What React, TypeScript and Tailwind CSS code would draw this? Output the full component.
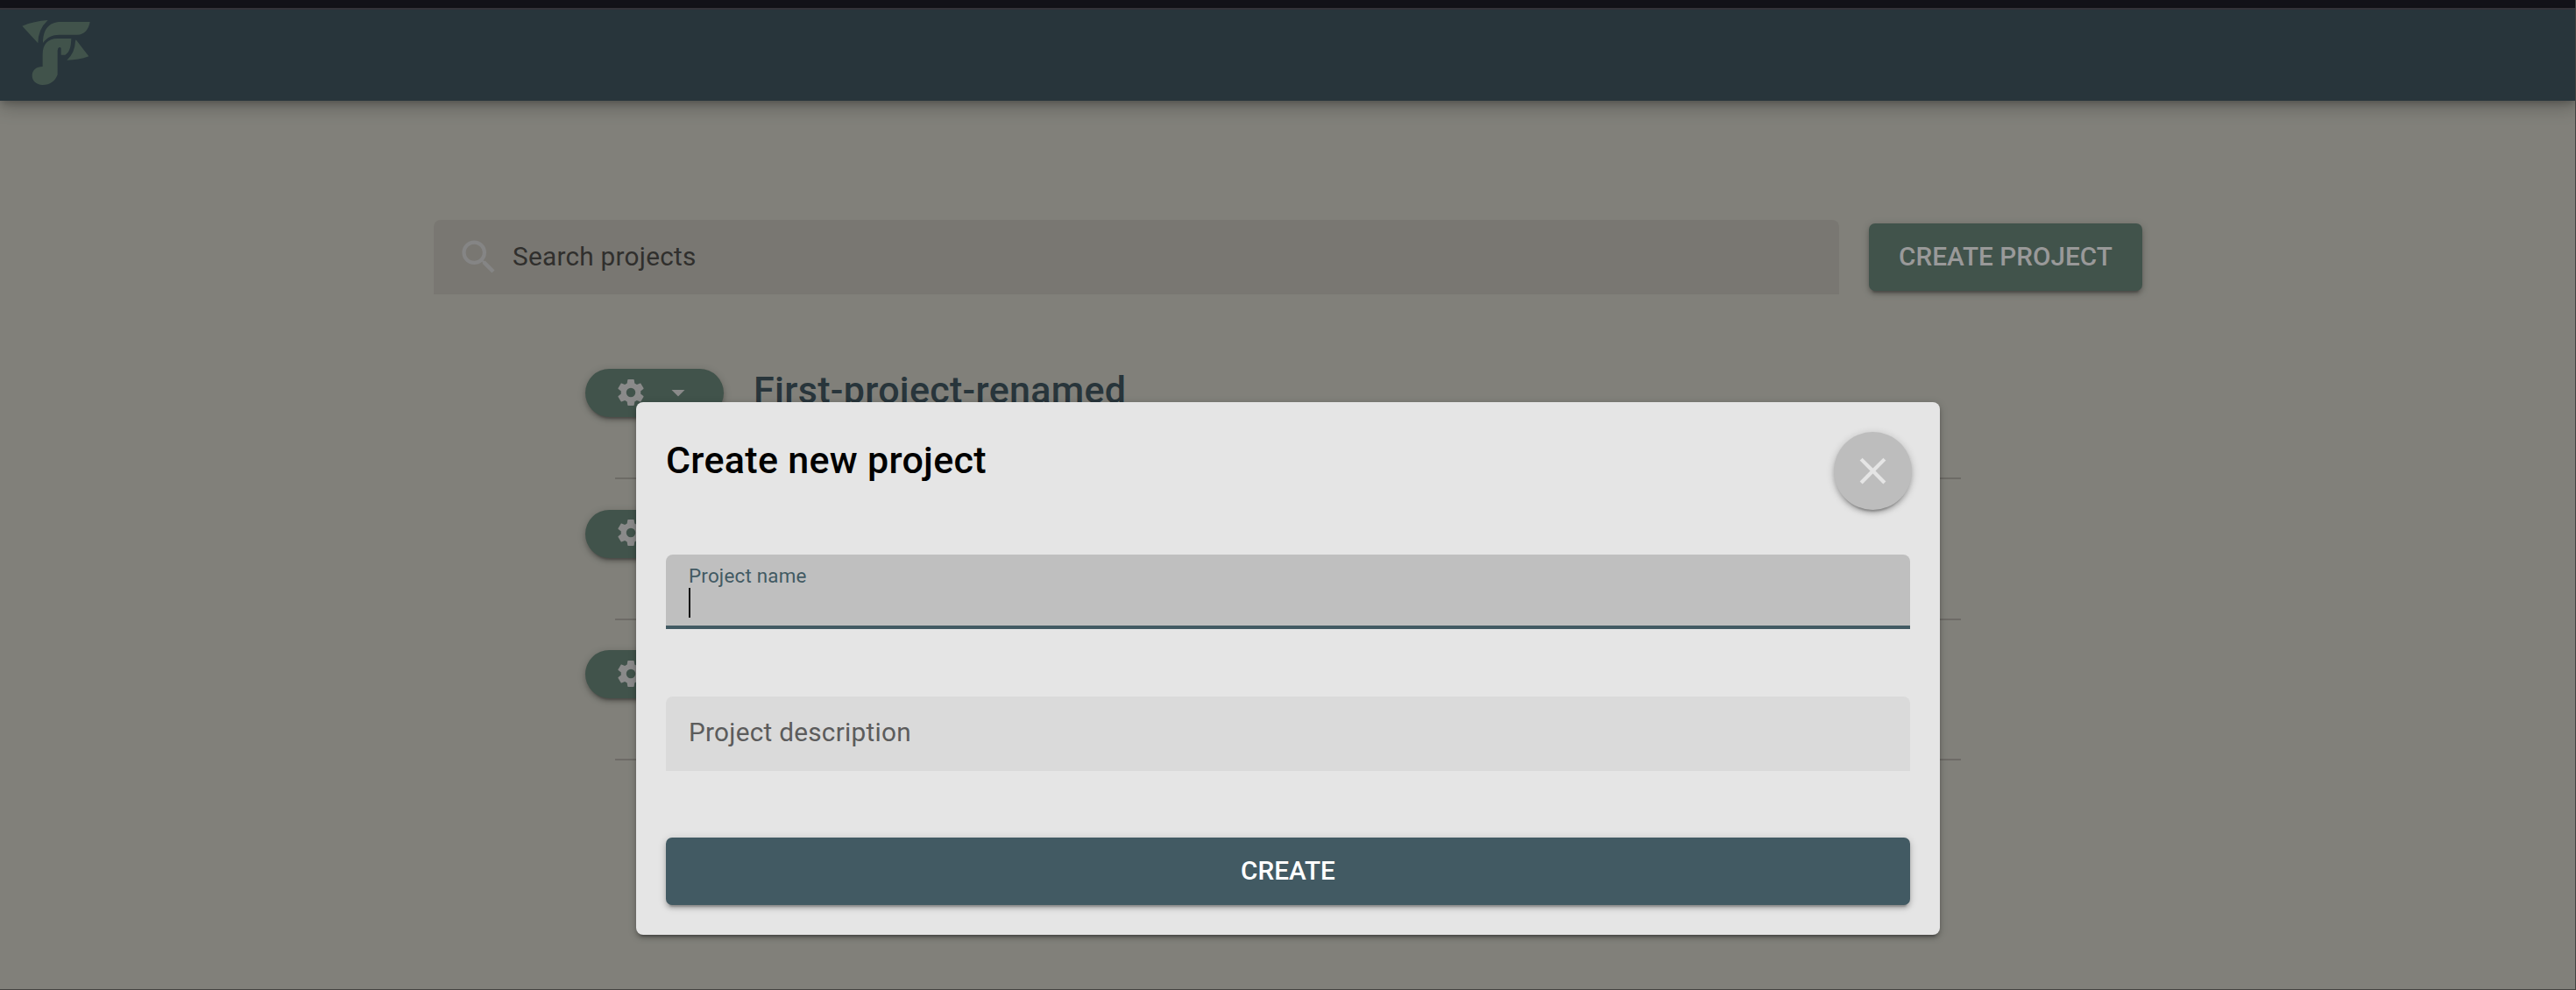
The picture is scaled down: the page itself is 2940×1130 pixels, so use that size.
import React from "react";
import { MdClose, MdSearch } from "react-icons/md";

const raised =
  "shadow-[0_6px_2px_-4px_rgba(0,0,0,0.2),0_4px_4px_0_rgba(0,0,0,0.14),0_2px_10px_0_rgba(0,0,0,0.2)]";

function Logo() {
  return (
    <svg className="h-[80px] w-[83px]" viewBox="70 60 249 240" fill="#41534b">
      <path d="M77 89 Q118 72 165 69 Q131 100 131 148 Z" />
      <path d="M148 147 C148 102 168 75 208 75 H309 C305 100 290 119 266 119 H205 C180 119 162 128 148 147 Z" />
      <path d="M147 228 V185 C147 152 165 132 197 132 H245 C244 160 240 178 224 188 H210 V166 Q209 161 204 162 Q198 164 198 173 V256 C190 278 172 291 147 291 C125 291 111 277 111 259 C111 240 126 228 147 228 Z" />
      <path d="M261 136 L305 193 Q270 206 230 206 Q258 180 259 140 Z" />
    </svg>
  );
}

function Gear() {
  return (
    <svg className="size-9" viewBox="0 0 24 24" fill="currentColor">
      <path d="M12,15.5A3.5,3.5 0 0,1 8.5,12A3.5,3.5 0 0,1 12,8.5A3.5,3.5 0 0,1 15.5,12A3.5,3.5 0 0,1 12,15.5M19.43,12.97C19.47,12.65 19.5,12.33 19.5,12C19.5,11.67 19.47,11.34 19.43,11L21.54,9.37C21.73,9.22 21.78,8.95 21.66,8.73L19.66,5.27C19.54,5.05 19.27,4.96 19.05,5.05L16.56,6.05C16.04,5.66 15.5,5.32 14.87,5.07L14.5,2.42C14.46,2.18 14.25,2 14,2H10C9.75,2 9.54,2.18 9.5,2.42L9.13,5.07C8.5,5.32 7.96,5.66 7.44,6.05L4.95,5.05C4.73,4.96 4.46,5.05 4.34,5.27L2.34,8.73C2.21,8.95 2.27,9.22 2.46,9.37L4.57,11C4.53,11.34 4.5,11.67 4.5,12C4.5,12.33 4.53,12.65 4.57,12.97L2.46,14.63C2.27,14.78 2.21,15.05 2.34,15.27L4.34,18.73C4.46,18.95 4.73,19.03 4.95,18.95L7.44,17.94C7.96,18.34 8.5,18.68 9.13,18.93L9.5,21.58C9.54,21.82 9.75,22 10,22H14C14.25,22 14.46,21.82 14.5,21.58L14.87,18.93C15.5,18.67 16.04,18.34 16.56,17.94L19.05,18.95C19.27,19.03 19.54,18.95 19.66,18.73L21.66,15.27C21.78,15.05 21.73,14.78 21.54,14.63L19.43,12.97Z" />
    </svg>
  );
}

function ProjectRow({ name }: { name?: string }) {
  return (
    <li className="h-[160.5px]">
      <div className="flex h-[124px] items-start">
        <button
          className={`flex h-[55px] w-[158px] shrink-0 items-center rounded-full bg-[#41534b] pb-[2px] pl-[34px] text-[#8a8a8a] ${raised}`}
        >
          <Gear />
          <svg className="ml-[18px] size-9" viewBox="0 0 24 24" fill="currentColor">
            <path d="M7,10L12,15L17,10H7Z" />
          </svg>
        </button>
        {name && (
          <h2 className="mt-[-2px] ml-[34px] text-[43px] leading-[52px] font-medium tracking-[0.3px] text-[#28353b]">
            {name}
          </h2>
        )}
      </div>
      <hr className="mx-[34px] h-[2px] border-0 bg-[#6d6b66]" />
    </li>
  );
}

function CreateDialog() {
  return (
    <section
      role="dialog"
      className="absolute top-[459px] left-[726px] flex h-[608px] w-[1488px] flex-col rounded-[8px] bg-[#e5e5e5] px-[34px] pt-[34px] shadow-[0_6px_2px_-4px_rgba(0,0,0,0.2),0_4px_4px_0_rgba(0,0,0,0.14),0_2px_10px_0_rgba(0,0,0,0.22)]"
    >
      <div className="mr-[-2px] flex h-[140px] items-start justify-between">
        <h1 className="mt-[6px] text-[43px] leading-[52px] font-medium tracking-[0.3px] text-black">
          Create new project
        </h1>
        <button
          className={`flex size-[89px] items-center justify-center rounded-full bg-[#bdbdbd] text-[#e5e5e5] ${raised}`}
        >
          <MdClose className="size-[51px]" />
        </button>
      </div>
      <label className="flex h-[85px] flex-col rounded-t-[8px] border-b-4 border-[#425a63] bg-[#bfbfbf] px-[26px] pt-[11px]">
        <span className="text-[22.4px] leading-[26px] tracking-[0.2px] text-[#425a63]">Project name</span>
        <span className="mt-px h-[34px] w-[2px] bg-[#111111]" />
      </label>
      <label className="mt-[77px] flex h-[85px] items-center rounded-t-[8px] bg-[#dadada] px-[26px] pb-[3px]">
        <span className="text-[29.75px] leading-9 tracking-[0.26px] text-[#5c5c5c]">Project description</span>
      </label>
      <button
        className={`mt-[76px] flex h-[77px] items-center justify-center rounded-[7px] bg-[#425a63] pb-px text-[29.75px] font-medium text-white ${raised}`}
      >
        CREATE
      </button>
    </section>
  );
}

export default function App() {
  return (
    <div className="relative h-[1130px] w-[2940px] overflow-hidden border-r border-b border-[#444341] bg-[#81807a] font-['Roboto',sans-serif]">
      <div className="-mr-px h-[9px] bg-[#14141a]" />
      <header className="relative -mr-px flex h-[106px] items-start border-t-2 border-[#333238] bg-[#28353b] pt-[9px] pl-[23px] shadow-[0_4px_8px_-2px_rgba(0,0,0,0.2),0_8px_20px_0_rgba(0,0,0,0.16),0_2px_20px_0_rgba(0,0,0,0.12)]">
        <Logo />
      </header>
      <main className="ml-[495px] w-[1950px] pt-[136px]">
        <div className="flex items-center gap-[34px]">
          <div className="flex h-[85px] flex-1 items-center rounded-t-[8px] bg-[#797772] pl-[26px]">
            <MdSearch className="size-[51px] text-[#858585]" />
            <span className="ml-[13px] pb-[2px] text-[29.75px] leading-9 tracking-[0.26px] text-[#302f2d]">
              Search projects
            </span>
          </div>
          <button
            className={`h-[77px] w-[312px] rounded-[7px] bg-[#41534b] pb-px text-[29.75px] font-medium text-[#999999] ${raised}`}
          >
            CREATE PROJECT
          </button>
        </div>
        <ul className="mt-[85px] ml-[173px] w-[1604px]">
          <ProjectRow name="First-project-renamed" />
          <ProjectRow />
          <ProjectRow />
        </ul>
      </main>
      <CreateDialog />
    </div>
  );
}
